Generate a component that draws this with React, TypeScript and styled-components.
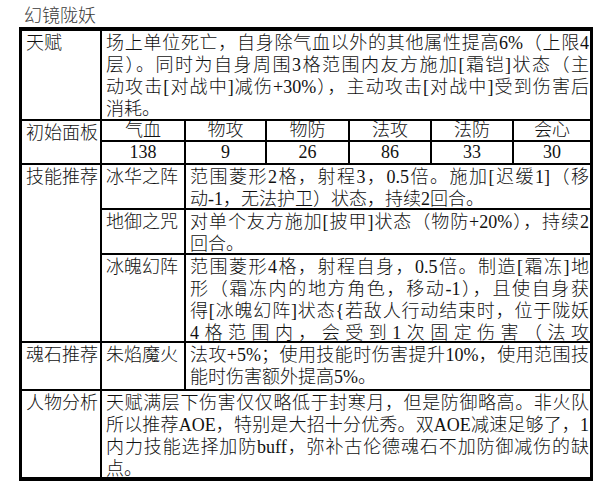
import { Fragment } from 'react';
import styled, { createGlobalStyle } from 'styled-components';

const GlobalStyle = createGlobalStyle`
  html, body {
    margin: 0;
    padding: 0;
    background: #ffffff;
  }
  body {
    font-family: "Liberation Serif", "Noto Sans CJK SC", serif;
    color: #111111;
  }
`;

const Page = styled.div`
  width: 609px;
  height: 499px;
  overflow: hidden;
  background: #ffffff;
`;

const Title = styled.div`
  box-sizing: border-box;
  height: 27px;
  padding: 6px 0 0 24px;
  font-size: 18px;
  line-height: 21px;
  font-weight: 300;
  color: #3a3a3a;
`;

const Sheet = styled.div`
  box-sizing: border-box;
  width: 574px;
  margin-left: 19px;
  padding: 4px 3px;
  background: #000000;
  display: grid;
  grid-template-columns: 78px 82px 79px 81px 80px 80px 76px;
  grid-template-rows: 88px 19px 21px 43px 43px 86px 46px 86px;
  gap: 2px;
  font-size: 18px;
  font-weight: 300;
`;

const Cell = styled.div<{ $span?: number; $rows?: number }>`
  box-sizing: border-box;
  background: #ffffff;
  overflow: hidden;
  padding: 1px 1px 0 4px;
  line-height: 22px;
  grid-column: span ${(p) => p.$span ?? 1};
  grid-row: span ${(p) => p.$rows ?? 1};
`;

const StatCell = styled.div<{ $h: number }>`
  background: #ffffff;
  text-align: center;
  line-height: ${(p) => p.$h}px;
  overflow: hidden;
`;

const Line = styled.div<{ $last?: boolean }>`
  white-space: nowrap;
  text-align: ${(p) => (p.$last ? 'left' : 'justify')};
  text-align-last: ${(p) => (p.$last ? 'left' : 'justify')};
`;

// open: the paragraph runs on past the cell, so its last visible line is justified too
const Para = ({ lines, span, open }: { lines: string[]; span: number; open?: boolean }) => (
  <Cell $span={span}>
    {lines.map((l, i) => (
      <Line key={i} $last={!open && i === lines.length - 1}>
        {l}
      </Line>
    ))}
  </Cell>
);

const stats = [
  ['气血', '138'],
  ['物攻', '9'],
  ['物防', '26'],
  ['法攻', '86'],
  ['法防', '33'],
  ['会心', '30'],
];

const skills = [
  {
    name: '冰华之阵',
    lines: ['范围菱形2格，射程3，0.5倍。施加[迟缓1]（移', '动-1，无法护卫）状态，持续2回合。'],
  },
  {
    name: '地御之咒',
    lines: ['对单个友方施加[披甲]状态（物防+20%），持续2', '回合。'],
  },
  {
    name: '冰魄幻阵',
    open: true,
    lines: [
      '范围菱形4格，射程自身，0.5倍。制造[霜冻]地',
      '形（霜冻内的地方角色，移动-1），且使自身获',
      '得[冰魄幻阵]状态{若敌人行动结束时，位于陇妖',
      '4格范围内，会受到1次固定伤害（法攻',
    ],
  },
];

export default function App() {
  return (
    <Page>
      <GlobalStyle />
      <Title>幻镜陇妖</Title>
      <Sheet>
        <Cell>天赋</Cell>
        <Para
          span={6}
          lines={[
            '场上单位死亡，自身除气血以外的其他属性提高6%（上限4',
            '层）。同时为自身周围3格范围内友方施加[霜铠]状态（主',
            '动攻击[对战中]减伤+30%），主动攻击[对战中]受到伤害后',
            '消耗。',
          ]}
        />

        <Cell $rows={2}>初始面板</Cell>
        {stats.map(([k]) => (
          <StatCell key={k} $h={19}>
            {k}
          </StatCell>
        ))}
        {stats.map(([k, v]) => (
          <StatCell key={k + v} $h={21}>
            {v}
          </StatCell>
        ))}

        <Cell $rows={3}>技能推荐</Cell>
        {skills.map((s) => (
          <Fragment key={s.name}>
            <Cell>{s.name}</Cell>
            <Para span={5} lines={s.lines} open={s.open} />
          </Fragment>
        ))}

        <Cell>魂石推荐</Cell>
        <Cell>朱焰魔火</Cell>
        <Para span={5} lines={['法攻+5%；使用技能时伤害提升10%，使用范围技', '能时伤害额外提高5%。']} />

        <Cell>人物分析</Cell>
        <Para
          span={6}
          lines={[
            '天赋满层下伤害仅仅略低于封寒月，但是防御略高。非火队',
            '所以推荐AOE，特别是大招十分优秀。双AOE减速足够了，1',
            '内力技能选择加防buff，弥补古伦德魂石不加防御减伤的缺',
            '点。',
          ]}
        />
      </Sheet>
    </Page>
  );
}
